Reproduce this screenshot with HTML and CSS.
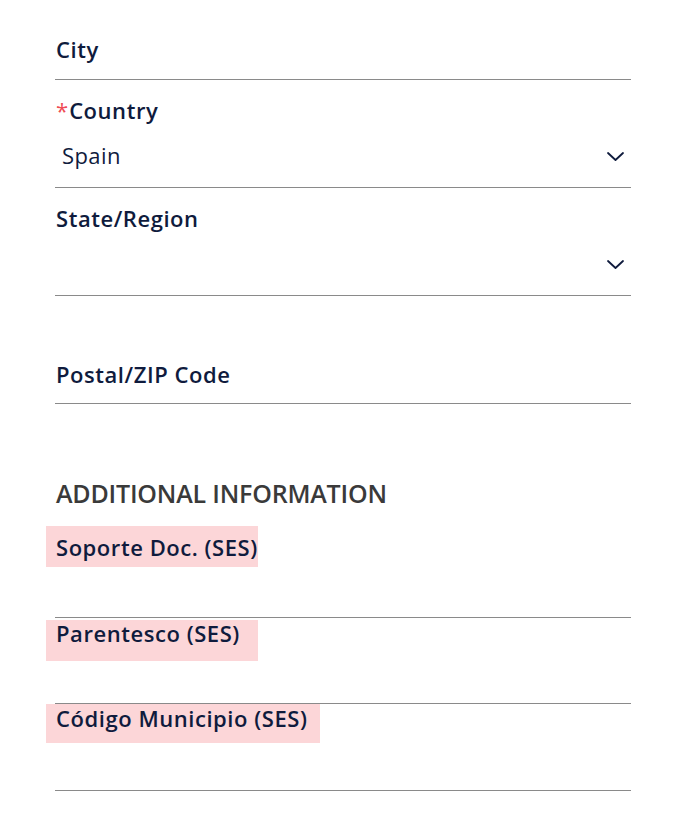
FILE: index.html
```html
<!DOCTYPE html>
<html lang="en">
<head>
<meta charset="utf-8">
<title>Address form</title>
<link rel="stylesheet" href="styles.css">
</head>
<body>
<form class="form">
  <div class="field field--city">
    <div class="label">City</div>
  </div>
  <div class="field field--select">
    <div class="label"><span class="req">*</span>Country</div>
    <div class="value-row">
      <span class="value">Spain</span>
      <svg class="chev" width="17" height="9" viewBox="0 0 17 9" aria-hidden="true"><polyline points="1,1 8.5,8 16,1" fill="none" stroke="#0f1b3d" stroke-width="1.8" stroke-linecap="round" stroke-linejoin="round"/></svg>
    </div>
  </div>
  <div class="field field--select">
    <div class="label">State/Region</div>
    <div class="value-row">
      <span class="value"></span>
      <svg class="chev" width="17" height="9" viewBox="0 0 17 9" aria-hidden="true"><polyline points="1,1 8.5,8 16,1" fill="none" stroke="#0f1b3d" stroke-width="1.8" stroke-linecap="round" stroke-linejoin="round"/></svg>
    </div>
  </div>
  <div class="field field--postal">
    <div class="label">Postal/ZIP Code</div>
  </div>

  <h2 class="section-title">ADDITIONAL INFORMATION</h2>

  <div class="field ses ses--first">
    <div class="label ses-label">Soporte Doc. (SES)</div>
  </div>
  <div class="field ses ses--second">
    <div class="label ses-label">Parentesco (SES)</div>
  </div>
  <div class="field ses ses--third">
    <div class="label ses-label ses-label--wide">Código Municipio (SES)</div>
  </div>
</form>
</body>
</html>
```

FILE: styles.css
```css
html, body {
  margin: 0;
  padding: 0;
  background: #ffffff;
}

body {
  font-family: "Open Sans", "Noto Sans", "Liberation Sans", sans-serif;
  color: #0f1b3d;
}

.form {
  width: 576px;
  margin-left: 55px;
  display: flex;
  flex-direction: column;
}

.field {
  border-bottom: 1px solid #8a8a8a;
  display: flex;
  flex-direction: column;
}

.label {
  font-size: 22px;
  font-weight: 600;
  line-height: 30px;
  letter-spacing: 0.55px;
  color: #0f1b3d;
  padding-left: 1px;
}

.req {
  color: #ef4b55;
  font-weight: 400;
  letter-spacing: 0;
  margin-right: 1px;
}

.field--city {
  padding-top: 34px;
  padding-bottom: 15px;
}

.field--select {
  padding-top: 15px;
  padding-bottom: 17px;
  gap: 15px;
}

.value-row {
  height: 30px;
  display: flex;
  align-items: center;
  justify-content: space-between;
  padding-left: 7px;
  padding-right: 7px;
}

.value {
  font-size: 22px;
  font-weight: 400;
  line-height: 30px;
  letter-spacing: 0.4px;
  color: #0f1b3d;
}

.chev {
  display: block;
  margin-top: 2px;
}

.field--postal {
  padding-top: 63px;
  padding-bottom: 14px;
}

.section-title {
  margin: 73px 0 17px 1px;
  font-size: 25px;
  line-height: 32px;
  font-weight: 600;
  letter-spacing: -0.2px;
  color: #3a3a3a;
}

.ses-label {
  box-sizing: border-box;
  width: 212px;
  height: 41px;
  margin-left: -9px;
  padding: 9px 0 0 10px;
  line-height: 24px;
  background: #fcd6d8;
  white-space: nowrap;
}

.ses-label--wide {
  width: 274px;
}

.ses--first {
  padding-bottom: 50px;
}

.ses--second {
  padding-top: 2px;
  padding-bottom: 42px;
}

.ses--second .ses-label {
  padding-top: 1px;
}

.ses--third {
  padding-bottom: 47px;
}

.ses--third .ses-label {
  height: 39px;
  padding-top: 2px;
}
```
